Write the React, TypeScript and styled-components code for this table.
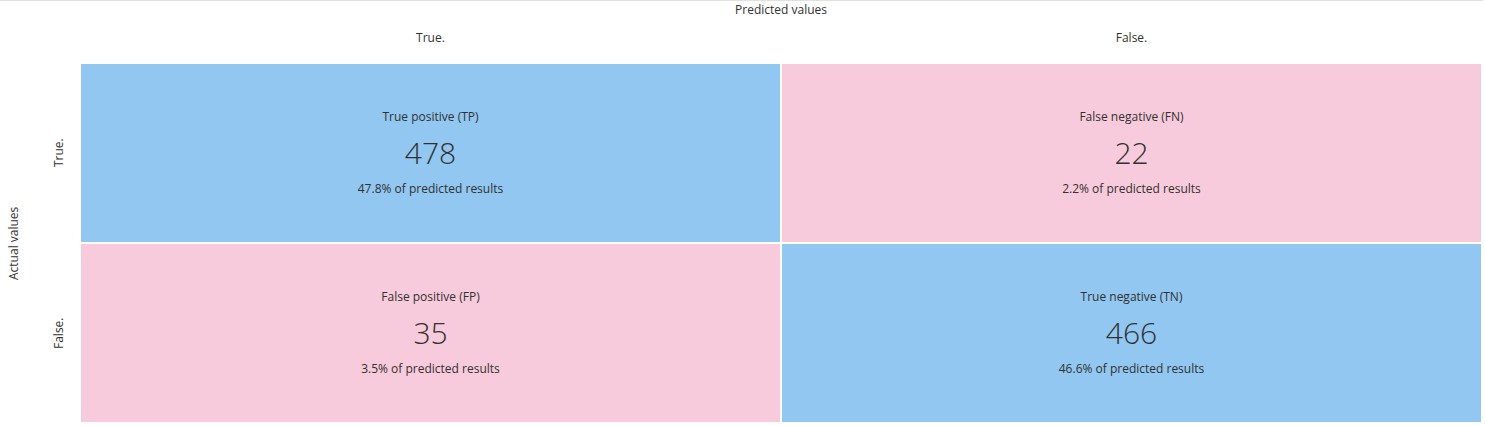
import React, { FC } from 'react'
import styled, { createGlobalStyle } from 'styled-components'

const GlobalStyle = createGlobalStyle`
    body {
        margin: 0;
        background: #ffffff;
        font-family: 'Open Sans', 'Noto Sans', sans-serif;
        color: #323130;
    }
`

interface CellData {
    title: string
    count: number
    share: string
    correct: boolean
}

const cells: CellData[] = [
    { title: 'True positive (TP)', count: 478, share: '47.8%', correct: true },
    { title: 'False negative (FN)', count: 22, share: '2.2%', correct: false },
    { title: 'False positive (FP)', count: 35, share: '3.5%', correct: false },
    { title: 'True negative (TN)', count: 466, share: '46.6%', correct: true },
]

const Page = styled.div`
    width: 1483px;
    border-top: 1px solid #e1e1e1;
`

const Chart = styled.div`
    display: grid;
    grid-template-columns: 81px 1400px;
    grid-template-rows: 17px 46px 358px;
`

const AxisTitle = styled.div`
    grid-column: 2;
    display: flex;
    justify-content: center;
    align-items: center;
    font-size: 12px;
`

const ColumnLabels = styled.div`
    grid-column: 2;
    display: grid;
    grid-template-columns: 1fr 1fr;
    column-gap: 2px;
`

const ColumnLabel = styled.div`
    display: flex;
    justify-content: center;
    align-items: center;
    padding-bottom: 8px;
    font-size: 12px;
`

const SideAxis = styled.div`
    display: flex;
`

const SideTitle = styled.div`
    width: 27px;
    display: flex;
    justify-content: center;
    align-items: center;
    font-size: 12px;
    writing-mode: vertical-rl;
    transform: rotate(180deg);
`

const RowLabels = styled.div`
    width: 54px;
    display: grid;
    grid-template-rows: 178px 178px;
    row-gap: 2px;
`

const RowLabel = styled.div`
    display: flex;
    justify-content: center;
    align-items: center;
    padding-right: 8px;
    font-size: 12px;
    writing-mode: vertical-rl;
    transform: rotate(180deg);
`

const Matrix = styled.div`
    display: grid;
    grid-template-columns: 1fr 1fr;
    grid-template-rows: 178px 178px;
    gap: 2px;
`

const Cell = styled.div<{ $correct: boolean }>`
    display: flex;
    flex-direction: column;
    justify-content: center;
    align-items: center;
    background: ${p => (p.$correct ? '#91c7f0' : '#f7cbdb')};
`

const CellTitle = styled.div`
    font-size: 12px;
    line-height: 16px;
`

const Count = styled.div`
    font-size: 30px;
    font-weight: 300;
    line-height: 40px;
    margin: 8px 0;
`

const Share = styled.div`
    font-size: 12px;
    line-height: 16px;
`

const App: FC = () => (
    <>
        <GlobalStyle />
        <Page>
            <Chart>
                <AxisTitle>Predicted values</AxisTitle>
                <ColumnLabels>
                    <ColumnLabel>True.</ColumnLabel>
                    <ColumnLabel>False.</ColumnLabel>
                </ColumnLabels>
                <SideAxis>
                    <SideTitle>Actual values</SideTitle>
                    <RowLabels>
                        <RowLabel>True.</RowLabel>
                        <RowLabel>False.</RowLabel>
                    </RowLabels>
                </SideAxis>
                <Matrix>
                    {cells.map(cell => (
                        <Cell key={cell.title} $correct={cell.correct}>
                            <CellTitle>{cell.title}</CellTitle>
                            <Count>{cell.count}</Count>
                            <Share>{cell.share} of predicted results</Share>
                        </Cell>
                    ))}
                </Matrix>
            </Chart>
        </Page>
    </>
)

export default App
